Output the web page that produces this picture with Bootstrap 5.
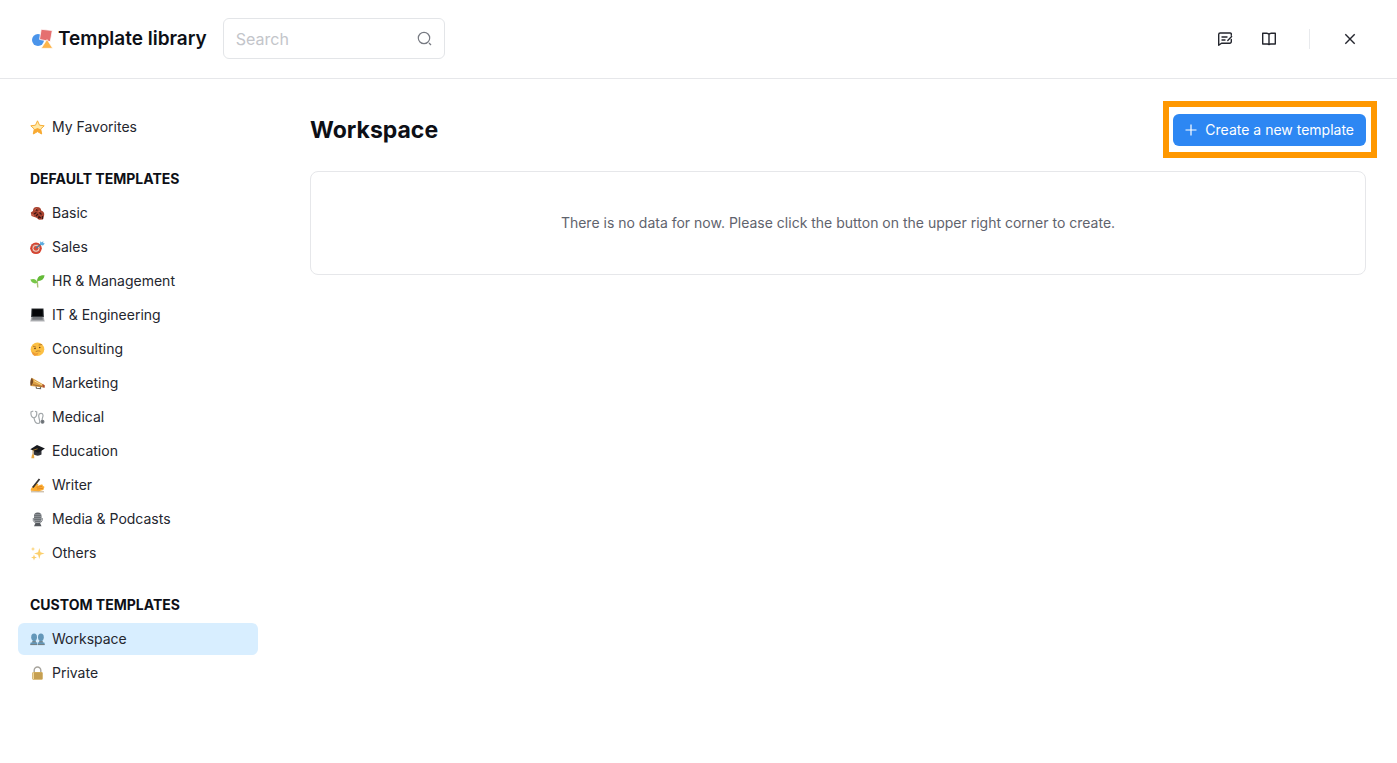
<!DOCTYPE html>
<html lang="en">
<head>
<meta charset="utf-8">
<meta name="viewport" content="width=device-width, initial-scale=1">
<title>Template library</title>
<link href="https://cdn.jsdelivr.net/npm/bootstrap@5.3.0/dist/css/bootstrap.min.css" rel="stylesheet">
<style>
  body { font-family: Inter, "Liberation Sans", sans-serif; font-size: 14px; line-height: 20px; color: #24262e; background: #fff; }
  .topbar { padding: 18px 29px 19px 30px; border-bottom: 1px solid #e6e7ea; }
  .brand-title { font-size: 19px; line-height: 28px; font-weight: 600; color: #0d0f16; }
  .search-box { width: 222px; height: 41px; border: 1px solid #e3e5e8; border-radius: 6px; padding: 0 12px; }
  .search-box input { font-size: 16px; line-height: 24px; height: 28px; box-shadow: none !important; min-width: 0; }
  .search-box input::placeholder { color: #c3c5ca; }
  .icon-btn { width: 36px; height: 36px; color: #24262e; }
  .tool-rule { width: 1px; height: 20px; margin: 0 22px; background: #e8eaed; }
  .sidebar { width: 240px; margin: 32px 52px 32px 18px; }
  .side-title { font-size: 14px; line-height: 20px; font-weight: 700; color: #0d0f16; padding: 8px 12px; margin: 18px 0 0; }
  .side-list { display: grid; gap: 2px; }
  .side-item { height: 32px; padding: 0 12px; gap: 7px; border-radius: 6px; color: #24262e; }
  .side-item:hover { background: #f3f5f7; }
  .side-item.active { background: #d8eeff; }
  .page-title { font-size: 23px; line-height: 34px; font-weight: 700; color: #0d0f16; }
  .content { padding: 34px 31px 32px 0; min-width: 0; }
  .create-btn { height: 32px; padding: 0 12px 0 10px; gap: 6px; font-size: 14px; line-height: 20px; border: 0; border-radius: 6px; color: #fff; background: #2d87f3; }
  .create-btn:hover { color: #fff; background: #1f77e0; }
  .spotlight::after { content: ""; position: absolute; inset: -13px -11px -12px -10px; border: 6px solid #ff9800; pointer-events: none; }
  .empty-card { border: 1px solid #e6e7ea; border-radius: 8px; padding: 41px 24px; margin-top: 24px; color: #5f636d; }
</style>
</head>
<body>
<header class="topbar d-flex align-items-center">
  <div class="d-flex align-items-center gap-1">
    <svg width="24" height="24" viewBox="0 0 24 24" aria-hidden="true">
      <circle cx="8" cy="13" r="6" fill="#4a94ea"/>
      <path d="M11.200 2.300 22.300 3.500 20.300 14.600 9.500 12.400Z" fill="#e56f70" stroke="#fff" stroke-width=".8"/>
      <path d="M17 12.500 22.600 21.300H11.300Z" fill="#fdb54b" stroke="#fff" stroke-width=".6"/>
    </svg>
    <h1 class="brand-title mb-0">Template library</h1>
  </div>
  <form class="search-box d-flex align-items-center ms-3" role="search">
    <input class="form-control border-0 p-0" type="text" placeholder="Search" aria-label="Search">
    <svg class="flex-shrink-0" width="15" height="15" viewBox="0 0 15 15" fill="none" stroke="#777a82" stroke-width="1.200" aria-hidden="true"><circle cx="7" cy="7" r="5.700"/><path d="m12 12 2 2"/></svg>
  </form>
  <div class="d-flex align-items-center ms-auto">
    <button class="icon-btn btn p-0 border-0 d-flex align-items-center justify-content-center me-2" type="button" aria-label="Feedback">
      <svg width="16" height="16" viewBox="0 0 16 16" fill="none" stroke="currentColor" stroke-width="1.400" stroke-linecap="round" stroke-linejoin="round"><path d="M14.300 4.300V3a1 1 0 0 0-1-1H3.200a1.500 1.500 0 0 0-1.500 1.500v10.800L4.500 12.200H12.800a1.500 1.500 0 0 0 1.500-1.500V8.500M5 6h5M5 9h3M14.600 5.600 10.800 9.400"/></svg>
    </button>
    <button class="icon-btn btn p-0 border-0 d-flex align-items-center justify-content-center" type="button" aria-label="Guide">
      <svg width="16" height="16" viewBox="0 0 16 16" fill="none" stroke="currentColor" stroke-width="1.400" stroke-linejoin="round"><path d="M8 3.500C7.500 2.500 6.800 2.200 5.800 2.200H1.700V13H6.500C7.300 13 7.700 13.300 8 14M8 3.500C8.500 2.500 9.200 2.200 10.200 2.200h4.100V13H9.500C8.700 13 8.300 13.300 8 14M8 3.500V14"/></svg>
    </button>
    <span class="tool-rule"></span>
    <button class="icon-btn btn p-0 border-0 d-flex align-items-center justify-content-center" type="button" aria-label="Close">
      <svg width="12" height="12" viewBox="0 0 12 12" fill="none" stroke="currentColor" stroke-width="1.400"><path d="m1.300 1.300 9.400 9.400m0-9.400-9.400 9.400"/></svg>
    </button>
  </div>
</header>

<div class="d-flex">
  <nav class="sidebar flex-shrink-0" aria-label="Template categories">
    <div class="side-list">
      <a class="side-item d-flex align-items-center text-decoration-none" href="#">
        <svg width="15" height="15" viewBox="0 0 15 15"><path d="m7.500.8 2 4.400 4.700.6-3.500 3.300 1 4.900-4.200-2.400L3.300 14l1-4.900L.8 5.800l4.700-.6Z" fill="#ffe9a8" stroke="#f6ad35" stroke-linejoin="round"/><path d="m3.300 14 .9-4.500 3.300-1.500 3.300 1.500.9 4.500-4.200-2.400Z" fill="#f9a932"/></svg>
        My Favorites</a>
    </div>

    <h2 class="side-title">DEFAULT TEMPLATES</h2>
    <div class="side-list">
      <a class="side-item d-flex align-items-center text-decoration-none" href="#">
        <svg width="15" height="15" viewBox="0 0 15 15"><path d="M.8 6.500 3 5C2.800 2.500 4.500.8 7 1c3 .1 4 1.500 4.200 3.500 2.300.7 3.300 2.500 3 4.500L13 13.500l-4 .3-2.500-2L1.500 10Z" fill="#a84330"/><path d="M4 8 6.500 6.500m-1-3 2 1M6 10l2-2M9.500 6.500l2 2M8.500 12.500l.5-2 2 1.500M12.500 10v3" stroke="#3c1715" stroke-width="1.200" fill="none"/><path d="m4.500 4 2-1.500M8.500 5.500l1.500-.5M1.800 8.500l2 1" stroke="#dd725b"/></svg>
        Basic</a>
      <a class="side-item d-flex align-items-center text-decoration-none" href="#">
        <svg width="15" height="15" viewBox="0 0 15 15" fill="none"><circle cx="6" cy="8.300" r="5.800" fill="#d9432f"/><circle cx="6" cy="8.300" r="4" fill="#f3c9ba" stroke="#a94232" stroke-width=".6"/><circle cx="6" cy="8.300" r="2.400" fill="#db4b36"/><path d="m6 8.300 6-5" stroke="#477b9c" stroke-width="1.200"/><path d="m10 4.700.3-3.500 1.500 1.300L13.300 1l-.1 2 1.600.4-1.800 2Z" fill="#5cacdf"/></svg>
        Sales</a>
      <a class="side-item d-flex align-items-center text-decoration-none" href="#">
        <svg width="15" height="15" viewBox="0 0 15 15"><path d="M7.600 5.500C7 8 7.600 10.500 7.800 13.500" stroke="#a9bf75" stroke-width="1.400" fill="none"/><path d="M7.300 6.800C7 3 10 .8 14.600 1.300 14 5.500 11 7.500 7.300 6.800Z" fill="#63ba38"/><path d="M7.200 8.700C6.500 5 4 4.300.3 5.500 2 9 4.500 10.300 7.200 8.700Z" fill="#77c747"/></svg>
        HR &amp; Management</a>
      <a class="side-item d-flex align-items-center text-decoration-none" href="#">
        <svg width="15" height="15" viewBox="0 0 15 15"><path d="M1.500.5h12l.4 8.500H1.100Z" fill="#303337"/><path d="M2.300 1.300h10.400v6.700H2.300Z" fill="#050608"/><path d="M1.300 9h12.400l.9 4.300H.4Z" fill="#a9abae"/><path d="M2.500 9.800h10M2.200 11h10.600" stroke="#4c4f53" stroke-width=".8"/><path d="M.4 13h14.200v.9H.4Z" fill="#d8d9db"/></svg>
        IT &amp; Engineering</a>
      <a class="side-item d-flex align-items-center text-decoration-none" href="#">
        <svg width="15" height="15" viewBox="0 0 15 15"><circle cx="7.500" cy="7.300" r="6.800" fill="#fcc044"/><path d="M3.300 4.300 5.700 5M9 3l2.500-.4M6 9.500c1.500-.8 3-.8 4-.3" fill="none" stroke="#a76a26" stroke-width=".8" stroke-linecap="round"/><circle cx="5" cy="6.500" r=".8" fill="#633b18"/><circle cx="9.700" cy="5.500" r=".8" fill="#633b18"/><path d="m2 9.500 3.800 2 3-1-1.500 2.500-2.500 1Q2 13 2 9.500Z" fill="#ef9b35"/></svg>
        Consulting</a>
      <a class="side-item d-flex align-items-center text-decoration-none" href="#">
        <svg width="15" height="15" viewBox="0 0 15 15"><path d="m6 10 .5 2.300 4 .3V10" fill="none" stroke="#6c6c68" stroke-width="1.200"/><path d="M1.800 1.800 14.300 9v2.500L.7 10Z" fill="#dda044"/><path d="M1.800 1.800C3.800 4.500 3.500 7.500.8 10-.2 8 .2 3.500 1.800 1.800Z" fill="#754a24"/><path d="M4 4.700 12 9" stroke="#f7dc94"/><path d="M2.700 8.700 12 10.500" stroke="#a46b30"/><path d="m12.500 8 2.200 1.200v2.500l-2.200-.4Z" fill="#ab4d32"/></svg>
        Marketing</a>
      <a class="side-item d-flex align-items-center text-decoration-none" href="#">
        <svg width="15" height="15" viewBox="0 0 15 15" fill="none" stroke="#a3a8ab" stroke-width="1.200"><path d="M3.300 1 1 2c-.5 3 .7 5.500 2.800 5.800C6.200 7.500 7 5 6.700 2L5 1.200M4 7.800c.5 3 1.500 5.700 4 5.700 3.500 0 .5-5 .7-8 .1-2.500 3.800-3 4.300-.5.300 2-1.200 3-.8 5.500"/><circle cx="12.500" cy="11.800" r="1.400" stroke="#74797e" fill="#666b70"/></svg>
        Medical</a>
      <a class="side-item d-flex align-items-center text-decoration-none" href="#">
        <svg width="15" height="15" viewBox="0 0 15 15"><path d="M3.700 6h7.800v4.500C9.500 12 6 12 3.700 10.500Z" fill="#303238"/><path d="m7 1 7.900 3.500-6.700 4.200L.3 5.300Z" fill="#17191e"/><path d="M7.600 4.800 3 6.300v6" stroke="#bd862e" fill="none" stroke-width=".8"/><path d="m2 10.500 2 .1.300 3.700H1.300Z" fill="#e5a640"/></svg>
        Education</a>
      <a class="side-item d-flex align-items-center text-decoration-none" href="#">
        <svg width="15" height="15" viewBox="0 0 15 15"><path d="M.8 11.300C2 8.500 4 7 6.500 5.800c1-.5 2.300.3 1.700 1.200L7.300 8l4-1.500c1.500-.4 2.200.9 1.200 1.500l1.300.3c1 .5.700 1.600-.2 1.800.7.600.3 1.700-.5 1.800L9 13.300.8 12.800Z" fill="#fcac30"/><path d="m6.500 9.300 5.500-.9M7 11l6-.7" stroke="#d77d24" stroke-width=".7"/><path d="M2.800 9.500 9.500 1" stroke="#363331" stroke-width="1.800"/><path d="M1 13.800h13" stroke="#8d6f42" stroke-width=".6"/></svg>
        Writer</a>
      <a class="side-item d-flex align-items-center text-decoration-none" href="#">
        <svg width="15" height="15" viewBox="0 0 15 15"><rect x="4" y=".5" width="7.500" height="10" rx="3.500" fill="#65696e"/><path d="M4.600 2.700h6.300M4 4.700h7.500M4 6.700h7.500M4.600 8.700h6.300" stroke="#a9adb1" stroke-width=".7"/><path d="M3.300 6v2.500Q4 11.300 7.700 11.300T12.200 8.500V6" stroke="#7c8085" fill="none"/><path d="M5.500 11h4.500l1.500 3.200H4Z" fill="#55595e"/></svg>
        Media &amp; Podcasts</a>
      <a class="side-item d-flex align-items-center text-decoration-none" href="#">
        <svg width="15" height="15" viewBox="0 0 15 15" fill="#fbcf6c"><path d="m9.300 2 1.200 4.300 4 1.200-4 1.200-1.200 4.300-1.200-4.300-4-1.200 4-1.200ZM4 8.500l.8 2.200 2.200.8-2.200.8L4 14.500l-.8-2.200-2.200-.8 2.200-.8ZM3 .7l.6 1.700 1.700.6-1.700.6L3 5.300l-.6-1.700L.7 3l1.700-.6Z"/></svg>
        Others</a>
    </div>

    <h2 class="side-title">CUSTOM TEMPLATES</h2>
    <div class="side-list">
      <a class="side-item active d-flex align-items-center text-decoration-none" href="#" aria-current="page">
        <svg width="15" height="15" viewBox="0 0 15 15"><g fill="#6397b9"><ellipse cx="4.100" cy="5.300" rx="2.900" ry="3.700"/><ellipse cx="10.900" cy="5.300" rx="2.900" ry="3.700"/><path d="M3 8h2.500v2L7.200 10.500V13H.4v-2.200L3 10ZM9.700 8h2.500v2l2.400.8V13H7.900v-2.500L9.700 10Z"/></g><path d="M.4 12.600h6.800M7.900 12.600h6.700M2 9.800h4M9 9.800h4" stroke="#767f80"/></svg>
        Workspace</a>
      <a class="side-item d-flex align-items-center text-decoration-none" href="#">
        <svg width="15" height="15" viewBox="0 0 15 15"><path d="M4.200 7V4.300a3.300 3.300 0 0 1 6.600 0V7" fill="none" stroke="#a7a49d" stroke-width="1.400"/><rect x="2.300" y="6" width="10.400" height="7.800" rx="1" fill="#d1ab59"/><path d="M2.500 8h10M2.500 10h10M2.500 12h10" stroke="#ad8440" stroke-width=".6"/><path d="M3.500 6.500v6.500" stroke="#f0d797"/></svg>
        Private</a>
    </div>
  </nav>

  <main class="content flex-grow-1">
    <div class="d-flex align-items-center justify-content-between">
      <h2 class="page-title mb-0">Workspace</h2>
      <div class="spotlight position-relative">
        <button class="create-btn btn d-flex align-items-center" type="button">
          <svg width="16" height="16" viewBox="0 0 16 16" stroke="currentColor" stroke-width="1.200" aria-hidden="true"><path d="M8 2.500v11M2.500 8h11"/></svg>
          Create a new template</button>
      </div>
    </div>
    <div class="empty-card text-center">There is no data for now. Please click the button on the upper right corner to create.</div>
  </main>
</div>
<script src="https://cdn.jsdelivr.net/npm/bootstrap@5.3.0/dist/js/bootstrap.bundle.min.js"></script>
</body>
</html>
